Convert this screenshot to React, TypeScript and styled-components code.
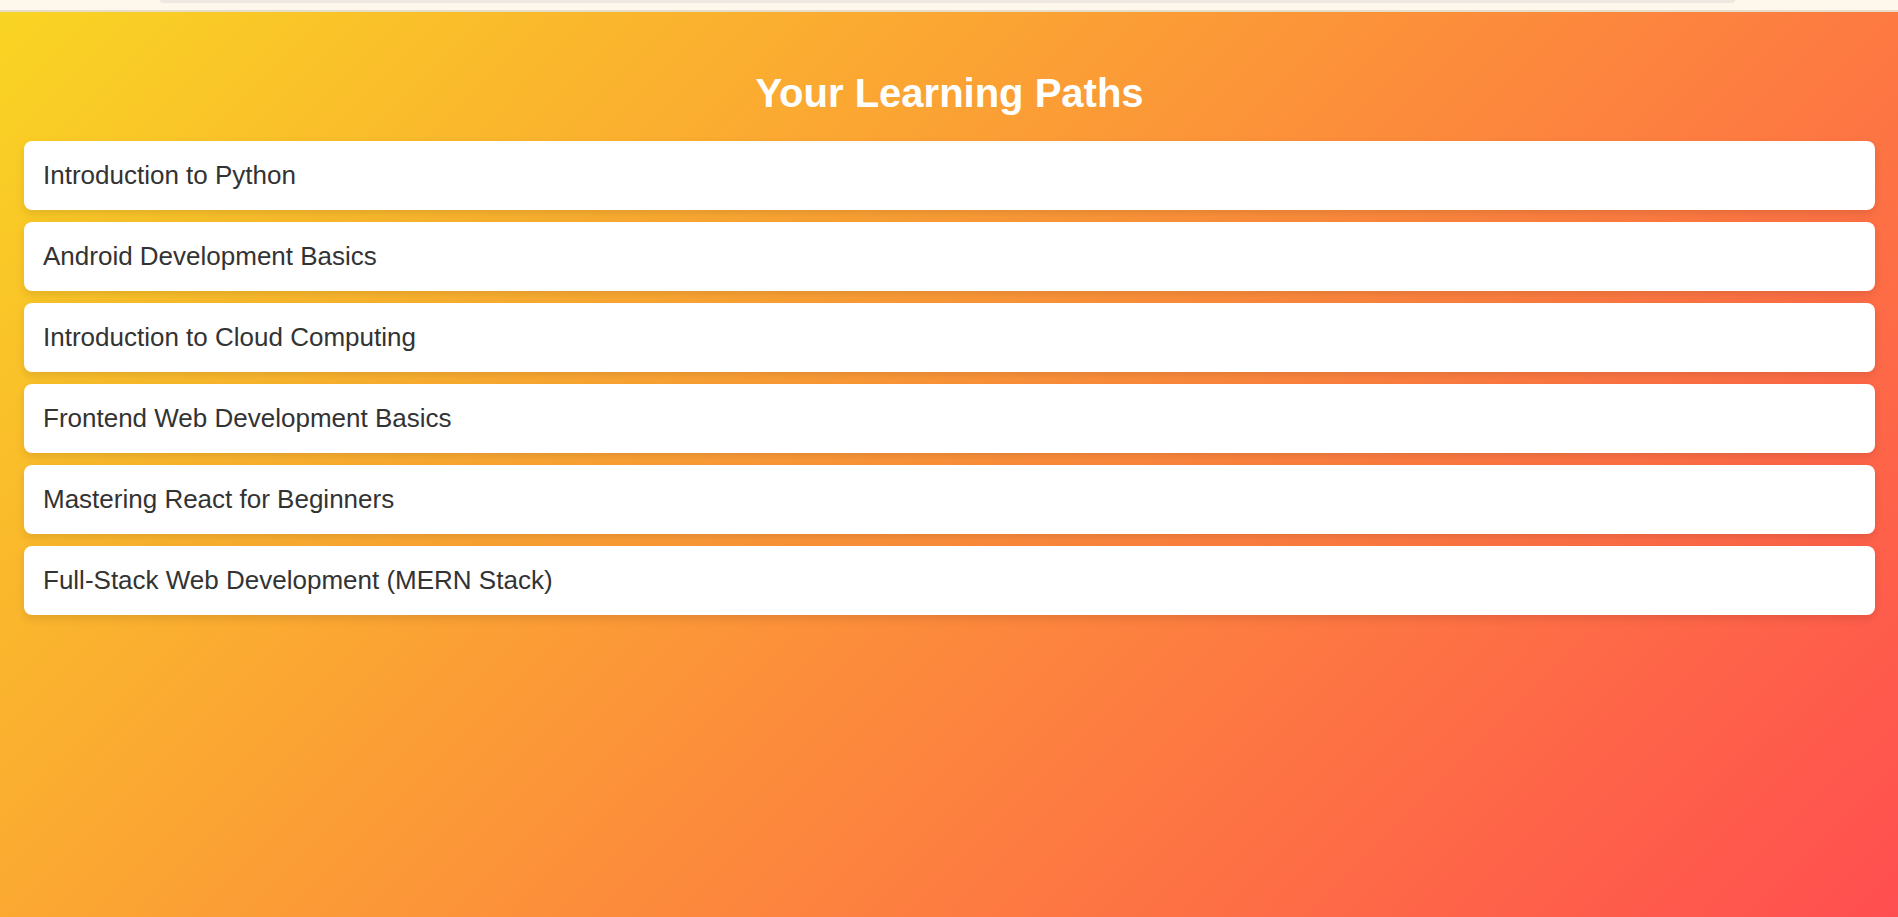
import React from "react";
import styled, { createGlobalStyle } from "styled-components";

const GlobalStyle = createGlobalStyle`
  html, body {
    margin: 0;
    padding: 0;
    height: 100%;
  }
  body {
    font-family: "Liberation Sans", Arial, sans-serif;
    overflow: hidden;
  }
  * { box-sizing: border-box; }
`;

const Page = styled.div`
  display: flex;
  flex-direction: column;
  min-height: 100vh;
`;

const ChromeStrip = styled.div`
  height: 12px;
  background: #fdf7ec;
  border-bottom: 2px solid #e8ddca;
  display: flex;
  padding: 0 163px 0 160px;
  flex-shrink: 0;
`;

const AddressTail = styled.div`
  flex: 1;
  height: 3px;
  background: #efe7e0;
  border-radius: 0 0 8px 8px;
`;

const Main = styled.main`
  flex: 1;
  background: linear-gradient(135deg, #f9d423 0%, #ff4e50 100%);
  padding: 58px 23px 40px 24px;
  display: flex;
  flex-direction: column;
`;

const Title = styled.h1`
  margin: 0 0 25px;
  text-align: center;
  color: #ffffff;
  font-size: 40px;
  font-weight: 700;
  line-height: 46px;
`;

const PathList = styled.ul`
  list-style: none;
  margin: 0;
  padding: 0;
  display: flex;
  flex-direction: column;
  gap: 12px;
`;

const PathItem = styled.li`
  background: #ffffff;
  border-radius: 8px;
  padding: 19px 20px 20px 19px;
  font-size: 26px;
  line-height: 30px;
  color: #333333;
  box-shadow: 0 4px 10px rgba(0, 0, 0, 0.1);
`;

const paths = [
  "Introduction to Python",
  "Android Development Basics",
  "Introduction to Cloud Computing",
  "Frontend Web Development Basics",
  "Mastering React for Beginners",
  "Full-Stack Web Development (MERN Stack)",
];

export default function App() {
  return (
    <>
      <GlobalStyle />
      <Page>
        <ChromeStrip>
          <AddressTail />
        </ChromeStrip>
        <Main>
          <Title>Your Learning Paths</Title>
          <PathList>
            {paths.map((p) => (
              <PathItem key={p}>{p}</PathItem>
            ))}
          </PathList>
        </Main>
      </Page>
    </>
  );
}
